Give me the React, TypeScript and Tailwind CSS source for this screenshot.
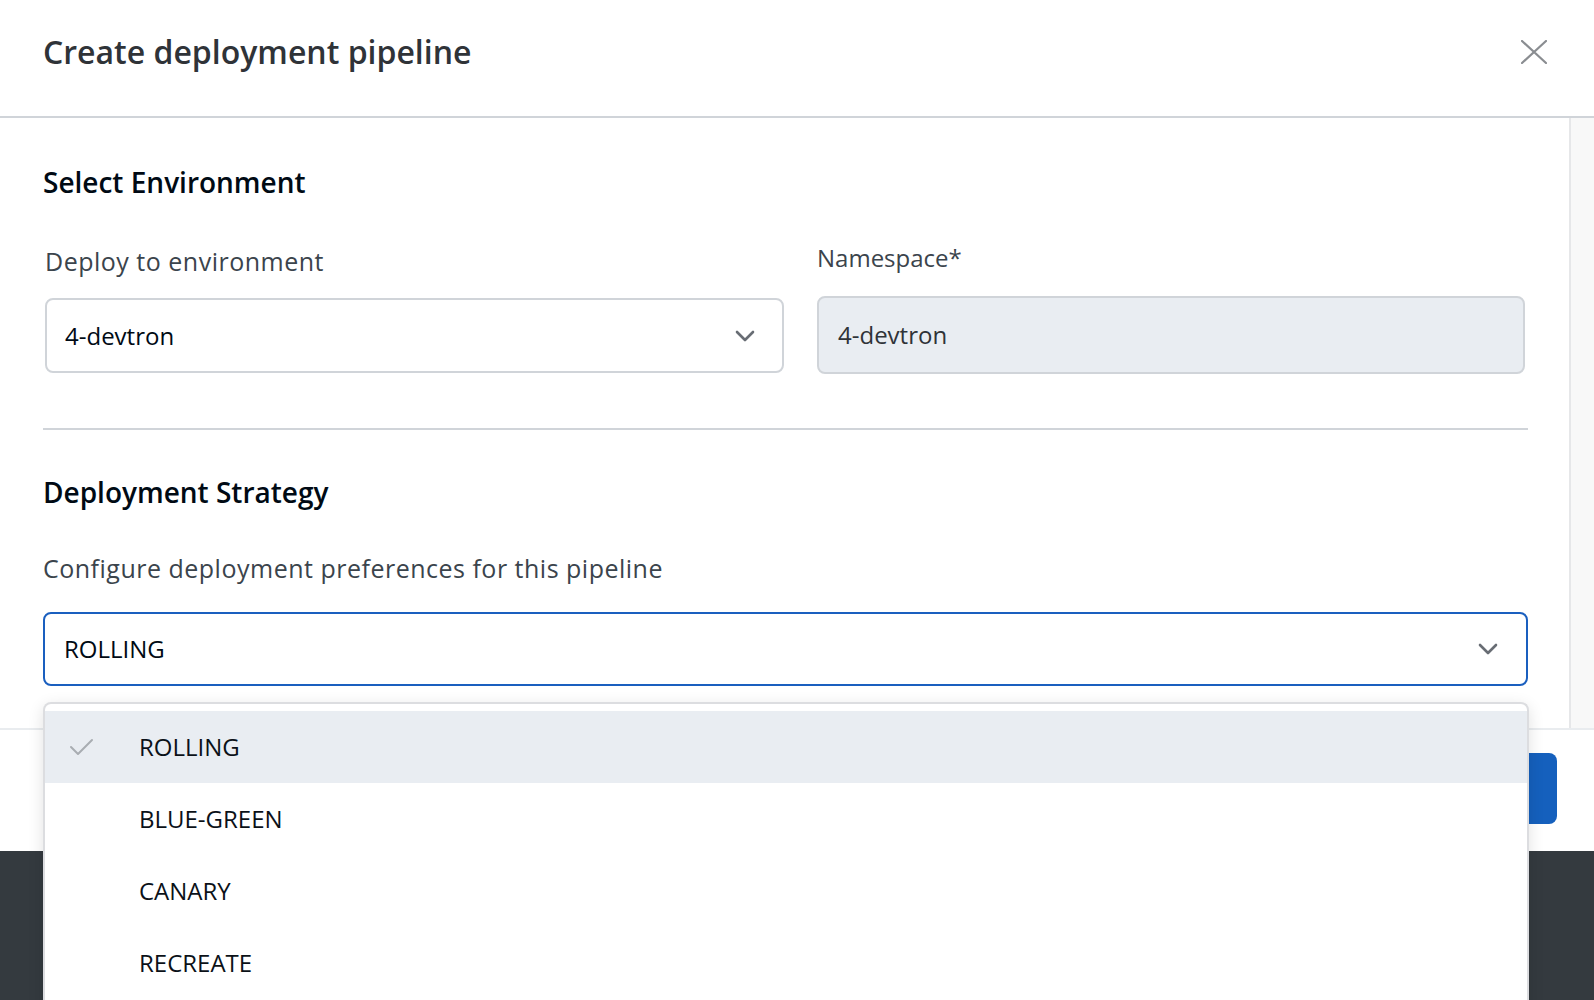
import React from 'react'

const strategies = ['ROLLING', 'BLUE-GREEN', 'CANARY', 'RECREATE']

const Chevron = () => (
    <svg width="20" height="12" viewBox="0 0 20 12" fill="none">
        <path d="M2 2 L10 10 L18 2" stroke="#686d74" strokeWidth="2.6" strokeLinecap="round" strokeLinejoin="round" />
    </svg>
)

const App = () => {
    return (
        <div className="relative h-screen w-full overflow-hidden bg-[#343a3f] font-['Open_Sans',sans-serif]">
            <div className="flex h-[851px] flex-col bg-white">
                {/* Header */}
                <div className="flex h-[118px] shrink-0 items-start justify-between border-b-2 border-[#d0d4d9] pl-[43px] pr-[47px] pt-[32px]">
                    <h1 className="text-[32px] leading-[40px] font-semibold text-[#2f3338]">Create deployment pipeline</h1>
                    <button className="mt-[8px]">
                        <svg width="26" height="24" viewBox="0 0 26 24" fill="none">
                            <path d="M1 1 L25 23 M25 1 L1 23" stroke="#8a8d91" strokeWidth="2.2" strokeLinecap="round" />
                        </svg>
                    </button>
                </div>

                {/* Body */}
                <div className="flex h-[610px] shrink-0">
                    <div className="flex-1 pl-[43px] pr-[41px] pt-[45px]">
                        <h2 className="text-[28px] leading-[38px] font-semibold text-[#000a14]">Select Environment</h2>

                        <div className="mt-[41px] flex gap-[33px]">
                            <div className="ml-[2px] w-[739px] pt-[3px]">
                                <div className="text-[25px] leading-[32px] tracking-[0.5px] text-[#3b444c]">Deploy to environment</div>
                                <div className="mt-[21px] flex h-[75px] items-center justify-between rounded-[8px] border-2 border-[#d0d4d9] bg-white pl-[18px] pr-[27px]">
                                    <span className="text-[24px] text-[#000a14]">4-devtron</span>
                                    <Chevron />
                                </div>
                            </div>
                            <div className="w-[708px]">
                                <div className="text-[24px] leading-[32px] text-[#3b444c]">Namespace*</div>
                                <div className="mt-[22px] flex h-[78px] items-center rounded-[8px] border-2 border-[#d0d4d9] bg-[#e9edf2] pl-[19px]">
                                    <span className="text-[24px] text-[#2f3338]">4-devtron</span>
                                </div>
                            </div>
                        </div>

                        <div className="mt-[54px] h-[2px] bg-[#d0d4d9]" />

                        <h2 className="mt-[43px] text-[28px] leading-[38px] font-semibold text-[#000a14]">Deployment Strategy</h2>
                        <p className="mt-[41px] text-[25px] leading-[32px] tracking-[0.5px] text-[#3b444c]">Configure deployment preferences for this pipeline</p>

                        <div className="relative mt-[28px]">
                            <div className="flex h-[74px] items-center justify-between rounded-[8px] border-2 border-[#1a5fbf] bg-white pl-[19px] pr-[28px]">
                                <span className="text-[24px] text-[#000a14]">ROLLING</span>
                                <Chevron />
                            </div>

                            {/* Open menu */}
                            <div className="absolute left-0 top-[90px] z-10 w-[1486px] rounded-t-[8px] border-2 border-b-0 border-[#dcdde0] bg-white pt-[7px] pb-[20px] shadow-[0_4px_16px_rgba(0,0,0,0.12)]">
                                {strategies.map((s, i) => (
                                    <div
                                        key={s}
                                        className={`flex h-[72px] items-center ${i === 0 ? 'bg-[#e9edf2]' : ''}`}
                                    >
                                        <div className="ml-[24px] flex w-[25px] items-center">
                                            {i === 0 && (
                                                <svg width="25" height="18" viewBox="0 0 25 18" fill="none">
                                                    <path d="M2 9 L9 16 L23 2" stroke="#a9adb2" strokeWidth="2" strokeLinecap="round" strokeLinejoin="round" />
                                                </svg>
                                            )}
                                        </div>
                                        <span className="ml-[45px] text-[24px] text-[#0b1118]">{s}</span>
                                    </div>
                                ))}
                            </div>
                        </div>
                    </div>
                    <div className="w-[25px] shrink-0 border-l-2 border-[#e6e7e9] bg-[#f8f8f8]" />
                </div>

                {/* Footer */}
                <div className="flex flex-1 items-start justify-end border-t-2 border-[#e9ecef] pr-[37px] pt-[23px]">
                    <button className="flex h-[71px] w-[240px] items-center justify-center rounded-[8px] bg-[#1560bd] text-[24px] font-semibold text-white">
                        Create Pipeline
                    </button>
                </div>
            </div>
        </div>
    )
}

export default App
